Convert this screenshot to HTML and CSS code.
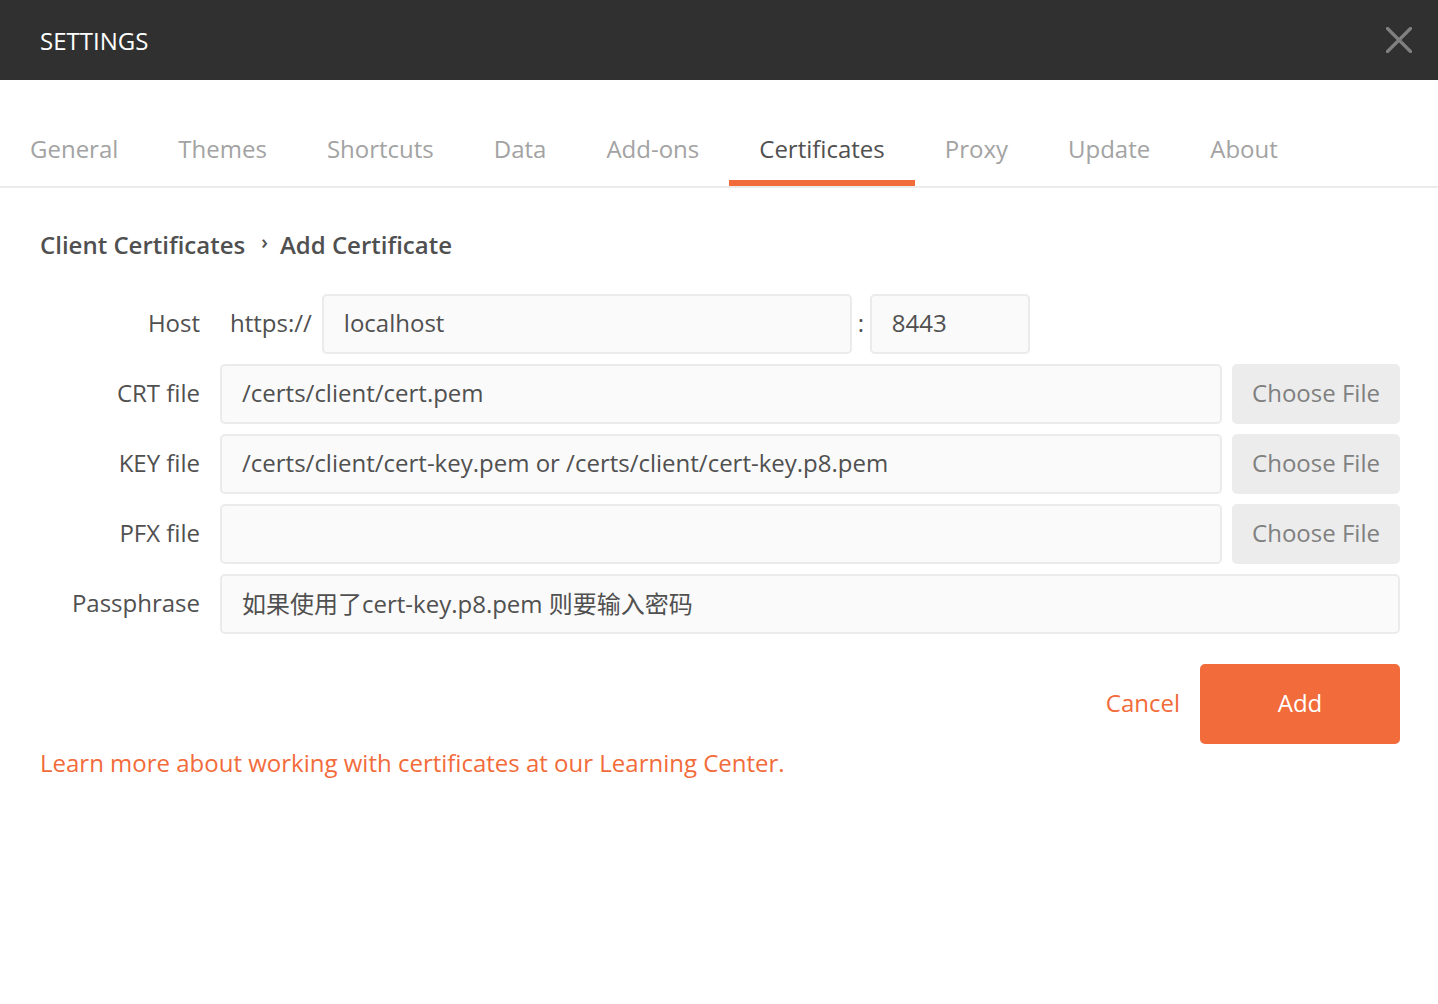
FILE: index.html
```html
<!DOCTYPE html>
<html>
<head>
<meta charset="utf-8">
<link rel="stylesheet" href="styles.css">
</head>
<body>
<div class="header">
  <div class="title">SETTINGS</div>
  <svg class="close" width="26" height="26" viewBox="0 0 26 26"><path d="M1.5 1.5 L24.5 24.5 M24.5 1.5 L1.5 24.5" stroke="#808080" stroke-width="3.2" stroke-linecap="round"/></svg>
</div>
<div class="tabs">
  <div class="tab">General</div>
  <div class="tab">Themes</div>
  <div class="tab">Shortcuts</div>
  <div class="tab">Data</div>
  <div class="tab">Add-ons</div>
  <div class="tab active">Certificates</div>
  <div class="tab">Proxy</div>
  <div class="tab">Update</div>
  <div class="tab">About</div>
</div>
<div class="content">
  <div class="crumbs"><span>Client Certificates</span><span class="chev">›</span><span>Add Certificate</span></div>
  <div class="form">
    <div class="label">Host</div>
    <div class="field host">
      <span class="proto">https://</span>
      <div class="input hostname">localhost</div>
      <span class="colon">:</span>
      <div class="input port">8443</div>
    </div>
    <div class="label">CRT file</div>
    <div class="field file">
      <div class="input grow">/certs/client/cert.pem</div>
      <div class="choose">Choose File</div>
    </div>
    <div class="label">KEY file</div>
    <div class="field file">
      <div class="input grow">/certs/client/cert-key.pem or /certs/client/cert-key.p8.pem</div>
      <div class="choose">Choose File</div>
    </div>
    <div class="label">PFX file</div>
    <div class="field file">
      <div class="input grow"></div>
      <div class="choose">Choose File</div>
    </div>
    <div class="label">Passphrase</div>
    <div class="field">
      <div class="input grow">如果使用了cert-key.p8.pem 则要输入密码</div>
    </div>
  </div>
  <div class="actions">
    <span class="cancel">Cancel</span>
    <div class="add">Add</div>
  </div>
  <div class="learn">Learn more about working with certificates at our Learning Center.</div>
</div>
</body>
</html>
```
FILE: styles.css
```css
* { box-sizing: border-box; }
body {
  margin: 0;
  font-family: "Open Sans", "Noto Sans CJK SC", sans-serif;
  color: #505050;
  background: #fff;
}
.header {
  height: 80px;
  background: #303030;
  display: flex;
  align-items: center;
  justify-content: space-between;
  padding: 0 26px 0 40px;
}
.title {
  color: #fff;
  font-size: 24px;
  line-height: 30px;
  padding-top: 1px;
}
.close { display: block; }
.tabs {
  display: flex;
  padding-top: 40px;
  border-bottom: 2px solid #ebebeb;
}
.tab {
  font-size: 24px;
  line-height: 30px;
  padding: 14px 30px 16px;
  border-bottom: 6px solid transparent;
  color: #a3a3a3;
}
.tab.active {
  color: #505050;
  border-bottom-color: #f26b3a;
}
.content {
  padding: 0 38px 0 40px;
}
.crumbs {
  margin-top: 42px;
  font-size: 24px;
  line-height: 30px;
  font-weight: 600;
  color: #505050;
  display: flex;
  align-items: center;
}
.chev {
  margin: 0 12px 0 16px;
  font-weight: 600;
  font-size: 20px;
  position: relative;
  top: -3px;
}
.form {
  margin-top: 34px;
  display: grid;
  grid-template-columns: 160px 1fr;
  column-gap: 20px;
  row-gap: 10px;
}
.label {
  font-size: 24px;
  height: 60px;
  display: flex;
  align-items: center;
  justify-content: flex-end;
  color: #505050;
  padding-bottom: 3px;
}
.field {
  display: flex;
  align-items: center;
  height: 60px;
}
.input {
  height: 60px;
  background: #fafafa;
  border: 2px solid #ebebeb;
  border-radius: 5px;
  font-size: 24px;
  display: flex;
  align-items: center;
  padding: 0 20px 3px;
  color: #505050;
  white-space: nowrap;
}
.grow { flex: 1; }
.proto {
  font-size: 24px;
  margin: 0 10px 3px 10px;
}
.hostname { width: 530px; }
.colon {
  font-size: 24px;
  width: 18px;
  text-align: center;
  padding-bottom: 3px;
}
.port { width: 160px; }
.choose {
  width: 168px;
  height: 60px;
  margin-left: 10px;
  background: #ececec;
  border-radius: 5px;
  color: #808080;
  font-size: 24px;
  display: flex;
  align-items: center;
  justify-content: center;
  padding-bottom: 3px;
}
.actions {
  margin-top: 30px;
  display: flex;
  justify-content: flex-end;
  align-items: center;
}
.cancel {
  color: #f26b3a;
  font-size: 24px;
  margin-right: 20px;
  padding-bottom: 3px;
}
.add {
  width: 200px;
  height: 80px;
  background: #f26b3a;
  border-radius: 5px;
  color: #fff;
  font-size: 24px;
  display: flex;
  align-items: center;
  justify-content: center;
  padding-bottom: 3px;
}
.learn {
  margin-top: 4px;
  color: #f26b3a;
  font-size: 24px;
  line-height: 30px;
}
```
